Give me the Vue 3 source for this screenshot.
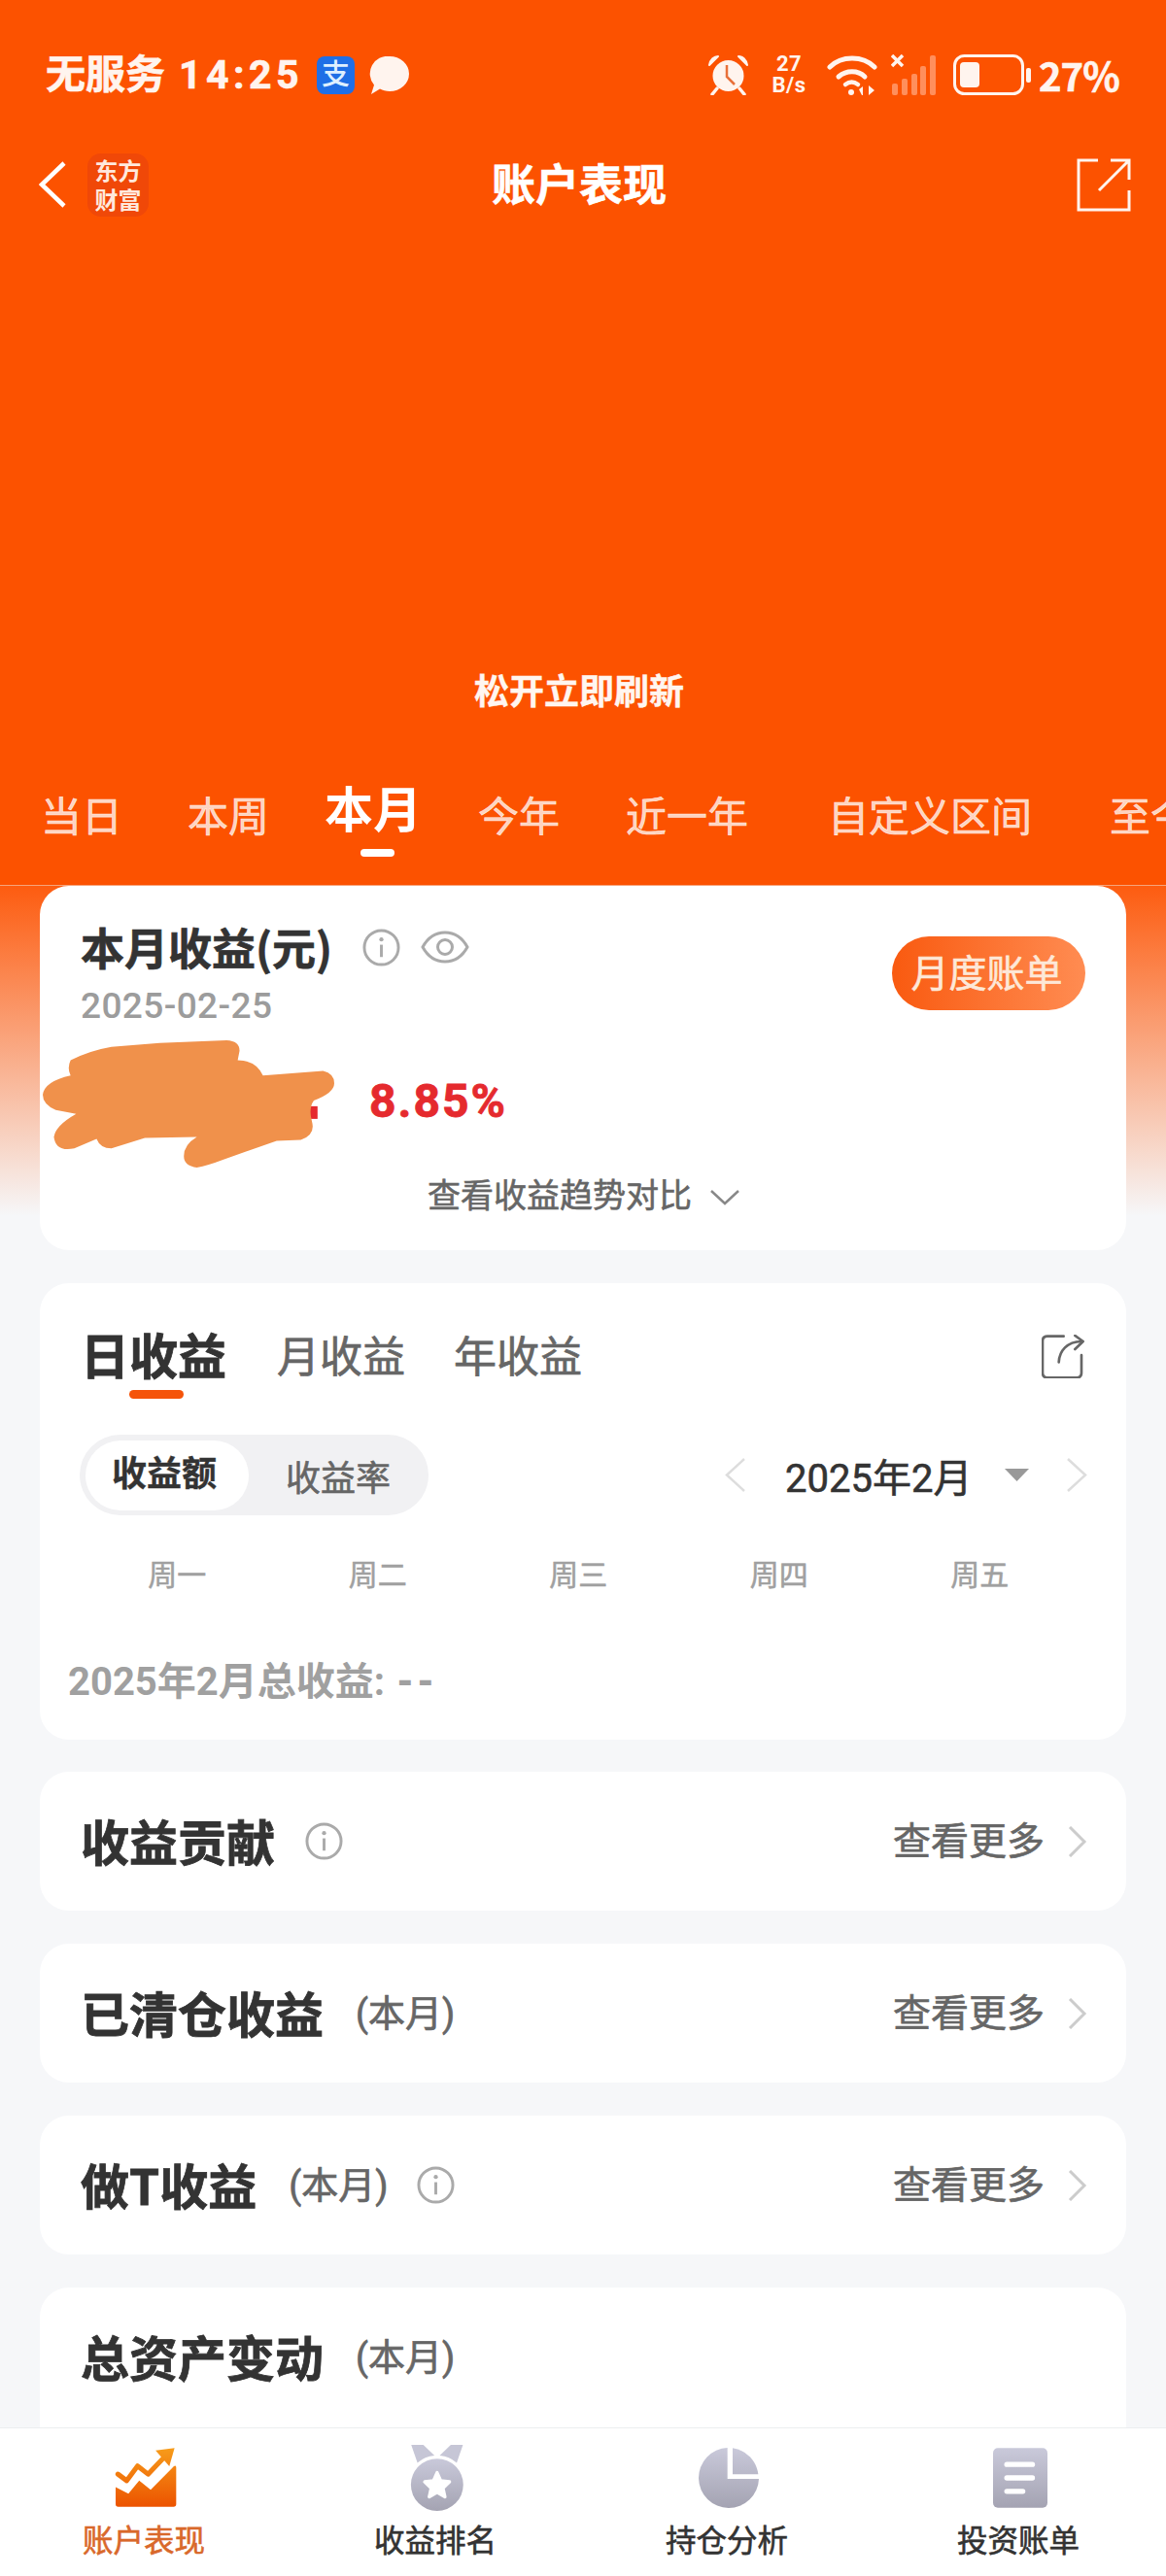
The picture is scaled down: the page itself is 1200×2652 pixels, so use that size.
<script setup>
const tabs = [
  { t: '当日', m: 42 },
  { t: '本周', m: 67 },
  { t: '本月', m: 57, on: true },
  { t: '今年', m: 58 },
  { t: '近一年', m: 68 },
  { t: '自定义区间', m: 82 },
  { t: '至今', m: 80 }
]
const week = ['周一', '周二', '周三', '周四', '周五']
</script>

<template>
  <div class="page">
    <header class="head">
      <div class="status">
        <span class="st-text">无服务</span>
        <span class="st-time">14:25</span>
        <span class="alipay">支</span>
        <svg class="bubble" width="41" height="39" viewBox="0 0 41 39"><path d="M21 0a20 18 0 0 1 0 36c-4 0-7-.8-10-2.400L2 39l3-9.500A18 18 0 0 1 21 0z" fill="#fff4ee"/></svg>
        <span class="st-space"></span>
        <svg class="alarm" width="41" height="42" viewBox="0 0 41 42">
          <circle cx="20.500" cy="22" r="16" fill="#fff4ee"/>
          <path d="M1 11C2 5 6 2 10 2l-9 9zM40 11C39 5 35 2 31 2l9 9z" fill="#fff4ee" stroke="#fff4ee" stroke-width="2" stroke-linejoin="round"/>
          <path d="M9 35l-5 6M32 35l5 6" stroke="#fff4ee" stroke-width="3.500" stroke-linecap="round"/>
          <path d="M19 11v12l8 8" fill="none" stroke="#e8703a" stroke-width="2.500"/>
        </svg>
        <span class="speed"><i>27</i><i>B/s</i></span>
        <svg class="wifi" width="52" height="42" viewBox="0 0 52 42" fill="none" stroke="#fff4ee" stroke-width="5" stroke-linecap="round">
          <path d="M3 13C15 1 37 1 49 13"/>
          <path d="M12 23c8-7 20-7 27 0"/>
          <path d="M19 31c4-3 9-3 13 0" stroke-width="4.500"/>
          <circle cx="25" cy="39" r="3" fill="#fff4ee" stroke="none"/>
          <path d="M33 36l4-3v9h-1M43 32v10l6-5z" fill="#fff4ee" stroke="none"/>
        </svg>
        <svg class="signal" width="46" height="42" viewBox="0 0 46 42">
          <path d="M1 1l11 11M12 1L1 12" stroke="#fff4ee" stroke-width="3.500"/>
          <g fill="#ff8f5c">
            <rect x="1" y="30" width="6" height="12" rx="2"/>
            <rect x="11" y="25" width="6" height="17" rx="2"/>
            <rect x="21" y="20" width="6" height="22" rx="2"/>
            <rect x="30" y="12" width="6" height="30" rx="2"/>
            <rect x="40" y="1" width="6" height="41" rx="2"/>
          </g>
        </svg>
        <svg class="battery" width="81" height="42" viewBox="0 0 81 42">
          <rect x="1.500" y="1.500" width="70" height="39" rx="10" fill="none" stroke="#fff4ee" stroke-width="3"/>
          <rect x="7" y="8" width="20" height="26" rx="4" fill="#fff4ee"/>
          <rect x="75" y="14" width="5" height="15" rx="2" fill="#fff4ee"/>
        </svg>
        <span class="st-pct">27%</span>
      </div>

      <div class="nav">
        <svg class="back" width="28" height="48" viewBox="0 0 28 48"><path d="M26 2L3 24l23 22" fill="none" stroke="#fff" stroke-width="4.500"/></svg>
        <span class="logo"><i>东方</i><i>财富</i></span>
        <span class="title">账户表现</span>
        <svg class="open" width="56" height="55" viewBox="0 0 56 55" fill="none" stroke="#fff4ee" stroke-width="3">
          <path d="M22 2H2v51h52V33"/>
          <path d="M23 33L54 2M35 2h19v20"/>
        </svg>
      </div>

      <div class="refresh">松开立即刷新</div>

      <div class="tabs">
        <span v-for="x in tabs" :key="x.t" class="tab" :class="{ on: x.on }" :style="{ marginLeft: x.m + 'px' }">{{ x.t }}</span>
      </div>
    </header>

    <main class="body">
      <section class="card summary">
        <div class="sum-top">
          <div>
            <div class="sum-title">
              <span>本月收益(元)</span>
              <svg class="i-info big" viewBox="0 0 40 40"><circle cx="20" cy="20" r="18" fill="none" stroke="#aaa" stroke-width="3"/><circle cx="20" cy="11.500" r="2.200" fill="#aaa"/><path d="M20 17v13" stroke="#aaa" stroke-width="3"/></svg>
              <svg class="eye" width="50" height="36" viewBox="0 0 50 36" fill="none" stroke="#aaa" stroke-width="3"><path d="M2 18C13 -2 37 -2 48 18C37 38 13 38 2 18z"/><circle cx="25" cy="18" r="7.500"/></svg>
            </div>
            <div class="sum-date">2025-02-25</div>
          </div>
          <span class="bill-btn">月度账单</span>
        </div>
        <div class="sum-rate">8.85%</div>
        <div class="sum-more">
          <span>查看收益趋势对比</span>
          <svg width="30" height="16" viewBox="0 0 30 16"><path d="M1 1l14 13L29 1" fill="none" stroke="#888" stroke-width="2.500"/></svg>
        </div>
        <svg class="scribble" viewBox="115 988 785 332" preserveAspectRatio="none">
          <rect x="820" y="1160" width="35" height="33" fill="#e52a2e"/>
          <path fill="#f0914b" d="M190 1040Q240 1015 300 1005L430 995L610 988Q645 990 645 1015L640 1040Q690 1040 708 1080L870 1068Q900 1075 900 1100Q900 1125 845 1145Q830 1165 840 1200Q850 1235 810 1248L745 1250L600 1300Q560 1315 530 1320Q495 1315 495 1290Q495 1260 530 1240L390 1243L300 1270Q270 1270 260 1245L200 1270Q150 1280 145 1240Q150 1210 205 1180L150 1170Q115 1155 115 1130Q120 1095 190 1080Q180 1060 190 1040z"/>
        </svg>
      </section>

      <section class="card daily">
        <div class="d-tabs">
          <span class="d-tab on">日收益</span>
          <span class="d-tab">月收益</span>
          <span class="d-tab">年收益</span>
          <svg class="d-share" width="44" height="45" viewBox="68 45 130 135" fill="none" stroke="#666" stroke-width="8" stroke-linecap="round" stroke-linejoin="round">
            <path d="M135 50H85Q70 50 70 65V163Q70 178 85 178H175Q190 178 190 163V108"/>
            <path d="M120 130C122 95 145 67 190 66"/>
            <path d="M170 48L195 66L170 90"/>
          </svg>
        </div>
        <div class="d-ctl">
          <div class="seg"><span class="seg-a">收益额</span><span class="seg-b">收益率</span></div>
          <div class="month">
            <svg width="23" height="35" viewBox="0 0 23 35"><path d="M21 1L3 17.500 21 34" fill="none" stroke="#ddd" stroke-width="2.500"/></svg>
            <span class="m-text">2025年2月</span>
            <svg class="tri" width="25" height="13" viewBox="0 0 25 13"><path d="M0 0h25L12.500 13z" fill="#999"/></svg>
            <svg width="23" height="35" viewBox="0 0 23 35"><path d="M2 1l18 16.500L2 34" fill="none" stroke="#ddd" stroke-width="2.500"/></svg>
          </div>
        </div>
        <div class="week"><span v-for="w in week" :key="w">{{ w }}</span></div>
        <div class="total">2025年2月总收益: <b>--</b></div>
      </section>

      <section class="card row">
        <span class="r-title">收益贡献</span>
        <svg class="i-info" viewBox="0 0 40 40"><circle cx="20" cy="20" r="18" fill="none" stroke="#aaa" stroke-width="3"/><circle cx="20" cy="11.500" r="2.200" fill="#aaa"/><path d="M20 17v13" stroke="#aaa" stroke-width="3"/></svg>
        <span class="r-more">查看更多</span>
        <svg class="r-arrow" width="20" height="32" viewBox="0 0 20 32"><path d="M2 1l15 15L2 31" fill="none" stroke="#ccc" stroke-width="3"/></svg>
      </section>

      <section class="card row">
        <span class="r-title">已清仓收益</span>
        <span class="r-sub">(本月)</span>
        <span class="r-more">查看更多</span>
        <svg class="r-arrow" width="20" height="32" viewBox="0 0 20 32"><path d="M2 1l15 15L2 31" fill="none" stroke="#ccc" stroke-width="3"/></svg>
      </section>

      <section class="card row">
        <span class="r-title">做T收益</span>
        <span class="r-sub">(本月)</span>
        <svg class="i-info tight" viewBox="0 0 40 40"><circle cx="20" cy="20" r="18" fill="none" stroke="#aaa" stroke-width="3"/><circle cx="20" cy="11.500" r="2.200" fill="#aaa"/><path d="M20 17v13" stroke="#aaa" stroke-width="3"/></svg>
        <span class="r-more">查看更多</span>
        <svg class="r-arrow" width="20" height="32" viewBox="0 0 20 32"><path d="M2 1l15 15L2 31" fill="none" stroke="#ccc" stroke-width="3"/></svg>
      </section>

      <section class="card row last">
        <span class="r-title">总资产变动</span>
        <span class="r-sub">(本月)</span>
      </section>
    </main>

    <nav class="bottom">
      <div class="b-item active">
        <svg width="64" height="62" viewBox="55 42 190 183">
          <defs><linearGradient id="g1" gradientUnits="userSpaceOnUse" x1="0" y1="42" x2="0" y2="222"><stop offset="0" stop-color="#f79c1a"/><stop offset="1" stop-color="#ec5300"/></linearGradient></defs>
          <path fill="url(#g1)" d="M58 162L97 182L130 142L165 170L236 98Q243 94 243 102V214Q243 222 235 222H66Q58 222 58 214Z"/>
          <path fill="none" stroke="url(#g1)" stroke-width="15" stroke-linecap="round" stroke-linejoin="round" d="M65 122L92 142L125 97L157 122L205 72"/>
          <path fill="url(#g1)" d="M180 50L238 42L222 98Z"/>
        </svg>
        <span>账户表现</span>
      </div>
      <div class="b-item">
        <svg width="56" height="68" viewBox="970 33 165 202">
          <defs><linearGradient id="g2" x1="0" y1="0" x2="0" y2="1"><stop offset="0" stop-color="#c9c9da"/><stop offset="1" stop-color="#a4a3b2"/></linearGradient></defs>
          <path fill="#c6c6d6" d="M973 33H1010L1044 66A90 90 0 0 0 992 88ZM1131 33H1094L1060 66A90 90 0 0 1 1112 88Z"/>
          <circle cx="1052" cy="155" r="80" fill="url(#g2)"/>
          <path fill="#fff" stroke="#fff" stroke-width="10" stroke-linejoin="round" d="M1052 118L1063 143L1090 146L1070 165L1076 192L1052 178L1028 192L1034 165L1014 146L1041 143Z"/>
        </svg>
        <span>收益排名</span>
      </div>
      <div class="b-item">
        <svg width="62" height="62" viewBox="57 42 186 186">
          <defs><linearGradient id="g3" gradientUnits="userSpaceOnUse" x1="0" y1="42" x2="0" y2="228"><stop offset="0" stop-color="#c9c9da"/><stop offset="1" stop-color="#a4a3b2"/></linearGradient></defs>
          <path fill="url(#g3)" d="M146 42V138H243A93 93 0 1 1 146 42Z"/>
          <path fill="url(#g3)" d="M162 43A93 93 0 0 1 241 124H162Z"/>
        </svg>
        <span>持仓分析</span>
      </div>
      <div class="b-item">
        <svg width="56" height="62" viewBox="965 42 170 186">
          <defs><linearGradient id="g4" x1="0" y1="0" x2="0" y2="1"><stop offset="0" stop-color="#c9c9da"/><stop offset="1" stop-color="#a4a3b2"/></linearGradient></defs>
          <rect x="965" y="42" width="170" height="186" rx="15" fill="url(#g4)"/>
          <rect x="1000" y="85" width="96" height="16" rx="8" fill="#fff"/>
          <rect x="1000" y="127" width="96" height="16" rx="8" fill="#fff"/>
          <rect x="1000" y="169" width="66" height="16" rx="8" fill="#fff"/>
        </svg>
        <span>投资账单</span>
      </div>
    </nav>
  </div>
</template>

<style>
html, body { margin: 0; padding: 0; background: #f6f7f9; }
</style>

<style scoped>
.page {
  position: relative;
  width: 1200px;
  height: 2652px;
  overflow: hidden;
  background: #f6f7f9;
  font-family: Roboto, "Noto Sans CJK SC", sans-serif;
  color: #333;
}
i { font-style: normal; display: block; }
.head {
  height: 912px;
  box-sizing: border-box;
  background: #fc5200;
  border-bottom: 1px solid #f6a47c;
  display: flex;
  flex-direction: column;
}
.status {
  display: flex;
  align-items: center;
  height: 42px;
  margin-top: 56px;
  padding: 0 47px;
  color: #fff4ee;
}
.st-text { font-size: 41px; font-weight: 700; line-height: 42px; width: 137px; white-space: nowrap; -webkit-text-stroke: .6px currentColor; }
.st-time { font-size: 41px; font-weight: 700; line-height: 42px; width: 142px; white-space: nowrap; letter-spacing: 4.500px; -webkit-text-stroke: .6px currentColor; }
.alipay {
  width: 39px; height: 39px; border-radius: 8px; background: #1f6fe6; color: #dff0ff;
  font-size: 29px; font-weight: 500; line-height: 38px; text-align: center;
}
.bubble { margin-left: 15px; }
.st-space { flex: 1; }
.speed { width: 44px; margin-left: 20px; font-size: 22px; font-weight: 700; line-height: 22px; text-align: center; letter-spacing: .5px; }
.wifi { margin-left: 17px; }
.signal { margin-left: 14px; }
.battery { margin-left: 18px; }
.st-pct { font-size: 40px; font-weight: 700; margin-left: 7px; width: 84px; letter-spacing: -1px; -webkit-text-stroke: .6px currentColor; font-family: "Noto Sans CJK SC", sans-serif; }
.nav {
  display: flex;
  align-items: center;
  height: 66px;
  margin-top: 59px;
  padding: 0 36px 0 40px;
  position: relative;
}
.logo {
  width: 63px; height: 65px; margin-left: 22px; border-radius: 14px; background: #f04808;
  color: #ffe9dd; font-size: 24px; font-weight: 700; line-height: 30px; text-align: center;
  display: flex; flex-direction: column; justify-content: center;
  font-family: "Noto Sans CJK SC", sans-serif;
}
.title { position: absolute; left: 506px; top: 2px; width: 180px; text-align: center; font-size: 45px; font-weight: 700; color: #fff; line-height: 66px; -webkit-text-stroke: .6px currentColor; white-space: nowrap; }
.open { margin-left: auto; }
.refresh { margin-top: 464px; text-align: center; font-size: 36px; font-weight: 700; color: #fff6f0; line-height: 52px; padding-right: 8px; -webkit-text-stroke: .4px currentColor; }
.tabs { display: flex; align-items: flex-end; margin-top: 71px; white-space: nowrap; height: 60px; flex: none; }
.tab { font-size: 42px; font-weight: 400; color: rgba(255,255,255,.76); line-height: 56px; position: relative; flex: none; -webkit-text-stroke: .6px currentColor; }
.tab.on { font-size: 50px; font-weight: 700; color: #fff; line-height: 66px; top: -2px; -webkit-text-stroke: 0; }
.tab.on::after {
  content: ""; position: absolute; left: 37px; top: 72px; width: 35px; height: 8px; border-radius: 4px; background: #fff;
}
.body {
  padding: 0 41px;
  background: linear-gradient(#fd5c10 0, #f6f7f9 340px);
  background-size: 100% 340px;
  background-repeat: no-repeat;
  display: flex;
  flex-direction: column;
  height: 1740px;
  box-sizing: border-box;
}
.card { background: #fff; border-radius: 30px; position: relative; flex: none; box-sizing: border-box; }
.summary { height: 375px; padding: 41px 42px 0; }
.sum-top { display: flex; justify-content: space-between; align-items: flex-start; }
.sum-title { display: flex; align-items: center; font-size: 45px; font-weight: 700; line-height: 44px; color: #333; -webkit-text-stroke: .7px currentColor; }
.sum-title span { width: 256px; white-space: nowrap; font-family: "Noto Sans CJK SC", sans-serif; }
.i-info { width: 39px; height: 39px; flex: none; }
.i-info.big { margin-left: 34px; }
.eye { margin-left: 21px; }
.sum-date { margin-top: 19px; font-size: 37px; font-weight: 500; color: #9c9c9c; line-height: 40px; letter-spacing: .4px; }
.bill-btn {
  margin-top: 11px; width: 199px; height: 76px; border-radius: 38px; box-sizing: border-box; padding-right: 4px;
  background: linear-gradient(90deg, #f95a10, #ff8c52);
  color: #fde8d8; font-size: 39px; font-weight: 400; line-height: 78px; text-align: center; -webkit-text-stroke: .6px currentColor; white-space: nowrap;
}
.sum-rate { position: absolute; left: 339px; top: 192px; font-size: 48px; font-weight: 700; color: #e52a2e; line-height: 60px; letter-spacing: 2px; -webkit-text-stroke: .8px currentColor; }
.sum-more { position: absolute; left: 399px; top: 295px; display: flex; align-items: center; gap: 19px; font-size: 34px; font-weight: 400; color: #666; line-height: 48px; white-space: nowrap; -webkit-text-stroke: .6px currentColor; }
.sum-more svg { margin-top: 4px; }
.scribble { position: absolute; left: 3px; top: 159px; width: 300px; height: 131px; }

.daily { margin-top: 34px; height: 470px; padding: 0 41px; }
.d-tabs { display: flex; align-items: center; height: 46px; padding-top: 52px; position: relative; }
.d-tab { font-size: 44px; font-weight: 400; color: #666; line-height: 46px; position: relative; top: 2px; margin-right: 50px; white-space: nowrap; -webkit-text-stroke: .7px currentColor; }
.d-tab.on { font-size: 50px; font-weight: 700; color: #333; margin-left: 1px; margin-right: 52px; -webkit-text-stroke: .8px currentColor; }
.d-tab.on::after { content: ""; position: absolute; left: 50px; top: 56px; width: 56px; height: 9px; border-radius: 5px; background: #f5540a; }
.d-share { margin-left: auto; margin-right: 2px; }
.d-ctl { display: flex; justify-content: space-between; align-items: center; margin-top: 58px; height: 83px; }
.seg { width: 359px; height: 83px; border-radius: 42px; background: #f1f1f3; display: flex; align-items: center; box-sizing: border-box; padding-left: 6px; font-size: 36px; }
.seg-a { width: 168px; height: 72px; border-radius: 36px; background: #fff; font-weight: 700; color: #333; text-align: center; line-height: 70px; padding-right: 6px; box-sizing: border-box; -webkit-text-stroke: .3px currentColor; }
.seg-b { margin-left: 38px; font-weight: 400; color: #666; -webkit-text-stroke: .6px currentColor; }
.month { display: flex; align-items: center; margin-right: -2px; }
.m-text { font-size: 40px; font-weight: 400; color: #333; margin-left: 40px; width: 190px; white-space: nowrap; -webkit-text-stroke: .6px currentColor; }
.tri { margin-left: 36px; margin-right: 38px; }
.week { display: grid; grid-template-columns: repeat(5, 206.500px); margin-left: -3px; margin-top: 39px; font-size: 30px; font-weight: 400; color: #a0a0a0; line-height: 46px; text-align: center; -webkit-text-stroke: .5px currentColor; }
.total { margin-top: 62px; margin-left: -12px; font-size: 40px; font-weight: 700; color: #a0a0a0; line-height: 50px; white-space: nowrap; }
.total b { letter-spacing: 3px; margin-left: 2px; }

.row { margin-top: 34px; height: 143px; display: flex; align-items: center; padding: 0 40px 0 42px; }
.daily + .row { margin-top: 33px; }
.row.last { height: 200px; padding-top: 0; align-items: flex-start; }
.row.last .r-title, .row.last .r-sub { margin-top: 47px; }
.r-title { position: relative; top: -2px; font-size: 50px; font-weight: 700; color: #333; line-height: 50px; white-space: nowrap; font-family: "Noto Sans CJK SC", sans-serif; -webkit-text-stroke: .8px currentColor; }
.row .i-info { margin-left: 31px; }
.row .i-info.tight { margin-left: 29px; }
.r-sub { margin-left: 33px; font-size: 38px; font-weight: 400; color: #666; line-height: 50px; white-space: nowrap; -webkit-text-stroke: .7px currentColor; }
.r-more { margin-left: auto; font-size: 39px; font-weight: 400; color: #666; line-height: 50px; white-space: nowrap; -webkit-text-stroke: .6px currentColor; }
.r-arrow { margin-left: 24px; }

.bottom {
  position: absolute; left: 0; right: 0; bottom: 0; height: 153px; box-sizing: border-box;
  background: #fff; border-top: 1px solid #eceef0;
  display: grid; grid-template-columns: repeat(4, 300px);
}
.b-item { position: relative; display: flex; flex-direction: column; align-items: center; padding-top: 17px; }
.b-item svg { height: 68px; }
.b-item span { position: absolute; top: 97px; font-size: 31.500px; font-weight: 400; color: #333; line-height: 40px; white-space: nowrap; margin-left: -4px; -webkit-text-stroke: .6px currentColor; }
.b-item.active span { color: #d9682a; }
</style>
